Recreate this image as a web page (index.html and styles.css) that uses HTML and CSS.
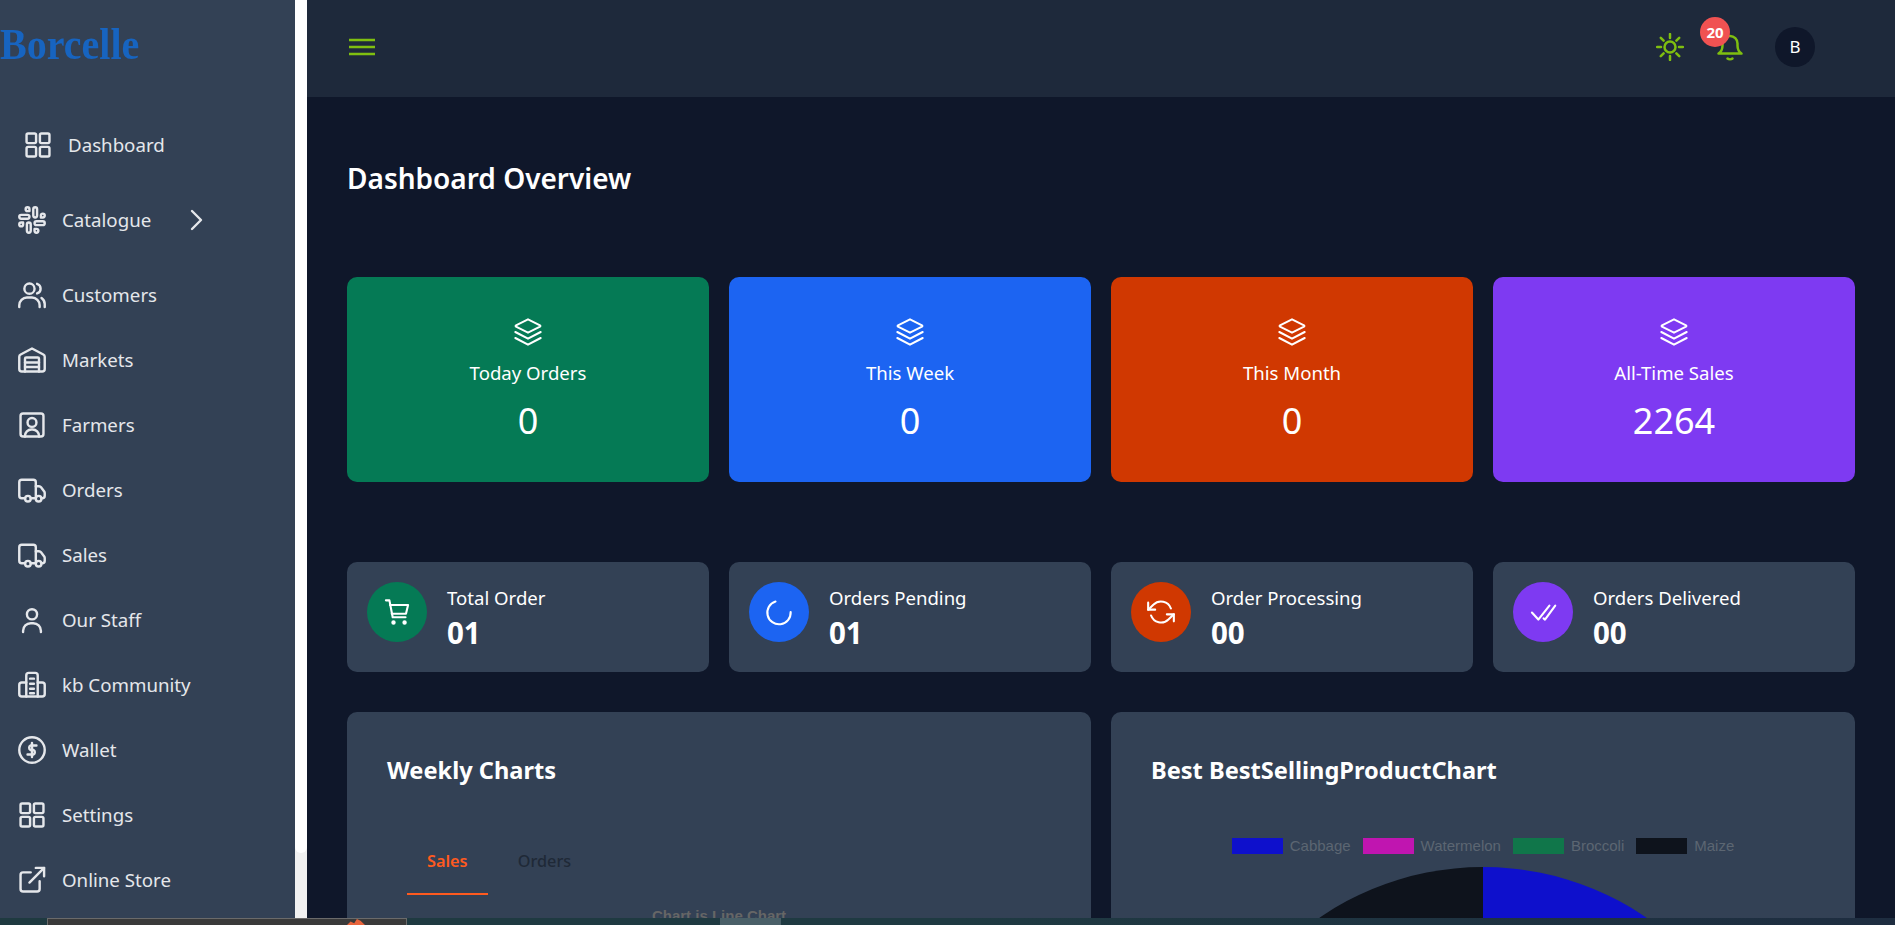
FILE: index.html
```html
<!DOCTYPE html>
<html lang="en">
<head>
  <meta charset="UTF-8" />
  <meta name="viewport" content="width=device-width, initial-scale=1.0"/>
  <title>Borcelle Dashboard</title>
  <link rel="stylesheet" href="styles.css">
</head>
<body>

  <svg class="sprites" width="0" height="0">
    <symbol id="i-grid" viewBox="1 1 22 22"><rect x="3" y="3" width="7.5" height="7.5" rx="1.2"/><rect x="13.5" y="3" width="7.5" height="7.5" rx="1.2"/><rect x="3" y="13.5" width="7.5" height="7.5" rx="1.2"/><rect x="13.5" y="13.5" width="7.5" height="7.5" rx="1.2"/></symbol>
    <symbol id="i-slack" viewBox="1 1 22 22"><path d="M14.5 10c-.83 0-1.5-.67-1.5-1.5v-5c0-.83.67-1.5 1.5-1.5s1.5.67 1.5 1.5v5c0 .83-.67 1.5-1.5 1.5z"/><path d="M20.5 10H19V8.5c0-.83.67-1.5 1.5-1.5s1.5.67 1.5 1.5-.67 1.5-1.5 1.5z"/><path d="M9.5 14c.83 0 1.5.67 1.5 1.5v5c0 .83-.67 1.5-1.5 1.5S8 21.33 8 20.5v-5c0-.83.67-1.5 1.5-1.5z"/><path d="M3.5 14H5v1.5c0 .83-.67 1.5-1.5 1.5S2 16.33 2 15.5 2.67 14 3.5 14z"/><path d="M14 14.5c0-.83.67-1.5 1.5-1.5h5c.83 0 1.5.67 1.5 1.5s-.67 1.5-1.5 1.5h-5c-.83 0-1.5-.67-1.5-1.5z"/><path d="M15.5 19H14v1.5c0 .83.67 1.5 1.5 1.5s1.5-.67 1.5-1.5-.67-1.5-1.5-1.5z"/><path d="M10 9.5C10 8.67 9.33 8 8.5 8h-5C2.67 8 2 8.67 2 9.5S2.67 11 3.5 11h5c.83 0 1.5-.67 1.5-1.5z"/><path d="M8.5 5H10V3.5C10 2.67 9.33 2 8.5 2S7 2.67 7 3.5 7.67 5 8.5 5z"/></symbol>
    <symbol id="i-users" viewBox="1 1 22 22"><circle cx="10" cy="7" r="4"/><path d="M2 21.5v-1.5a6 6 0 0 1 6-6h4a6 6 0 0 1 6 6v1.5"/><path d="M16 3.2a4 4 0 0 1 0 7.6"/><path d="M19.500 14.300a6 6 0 0 1 2.500 5v2.200"/></symbol>
    <symbol id="i-store" viewBox="1 1 22 22"><path d="M2 9.5a2 2 0 0 1 1.1-1.8L12 3l8.9 4.7A2 2 0 0 1 22 9.5V19a2 2 0 0 1-2 2H4a2 2 0 0 1-2-2z"/><path d="M6.5 21V11a1 1 0 0 1 1-1h9a1 1 0 0 1 1 1v10"/><path d="M6.5 14h11M6.5 17.5h11"/></symbol>
    <symbol id="i-contact" viewBox="1 1 22 22"><rect x="3" y="3" width="18" height="18" rx="2"/><circle cx="12" cy="10" r="3.5"/><path d="M6.5 21v-.5a5 5 0 0 1 5-5h1a5 5 0 0 1 5 5v.5"/></symbol>
    <symbol id="i-truck" viewBox="1 1 22 22"><path d="M6.5 18.5H4a2 2 0 0 1-2-2V6a2 2 0 0 1 2-2h9a2 2 0 0 1 2 2v12.5h-4"/><path d="M15 9h2.5a2 2 0 0 1 1.6.8l2.5 3.4a2 2 0 0 1 .4 1.2v2.1a2 2 0 0 1-2 2h-.5"/><circle cx="8.8" cy="18.8" r="2.2"/><circle cx="17.2" cy="18.8" r="2.2"/></symbol>
    <symbol id="i-user" viewBox="1 1 22 22"><circle cx="12" cy="7.500" r="4"/><path d="M5 21.500v-1a6 6 0 0 1 6-6h2a6 6 0 0 1 6 6v1"/></symbol>
    <symbol id="i-building" viewBox="1 1 22 22"><path d="M7.5 21V4.500a2 2 0 0 1 2-2h5a2 2 0 0 1 2 2V21"/><path d="M7.500 10H4a2 2 0 0 0-2 2v7a2 2 0 0 0 2 2h16a2 2 0 0 0 2-2v-7a2 2 0 0 0-2-2h-3.500"/><path d="M10.500 7h3M10.500 11h3M10.500 15h3M10.500 18.500h3"/></symbol>
    <symbol id="i-dollar" viewBox="1 1 22 22"><circle cx="12" cy="12" r="10"/><path d="M15.500 8.500H10.800a2 2 0 0 0 0 3.500h2.400a2 2 0 0 1 0 3.500H8.500"/><path d="M12 6.500v11"/></symbol>
    <symbol id="i-link" viewBox="1 1 22 22"><path d="M11 6H5a2 2 0 0 0-2 2v11a2 2 0 0 0 2 2h11a2 2 0 0 0 2-2v-6"/><path d="M15 2.500h6.500V9"/><path d="M10 14L21.500 2.500"/></symbol>
    <symbol id="i-layers" viewBox="1.500 1.500 21 21"><path d="M12 2.500l9 4.600a.5.5 0 0 1 0 .9L12 12.500 3 8a.5.5 0 0 1 0-.9z"/><path d="M2.500 12l9.500 5 9.500-5"/><path d="M2.500 16.500l9.500 5 9.500-5"/></symbol>
  </svg>

  <div class="app">
    <!-- Sidebar -->
    <aside class="sidebar">
      <div class="logo">Borcelle</div>
      <nav class="menu">
        <a class="menu-item menu-first" href="#"><svg class="icon"><use href="#i-grid"/></svg>Dashboard</a>
        <a class="menu-item menu-catalogue" href="#"><svg class="icon"><use href="#i-slack"/></svg>Catalogue
          <svg class="chevron" viewBox="0 0 24 24"><path d="M8 3l9 9-9 9"/></svg></a>
        <a class="menu-item" href="#"><svg class="icon"><use href="#i-users"/></svg>Customers</a>
        <a class="menu-item" href="#"><svg class="icon"><use href="#i-store"/></svg>Markets</a>
        <a class="menu-item" href="#"><svg class="icon"><use href="#i-contact"/></svg>Farmers</a>
        <a class="menu-item" href="#"><svg class="icon"><use href="#i-truck"/></svg>Orders</a>
        <a class="menu-item" href="#"><svg class="icon"><use href="#i-truck"/></svg>Sales</a>
        <a class="menu-item" href="#"><svg class="icon"><use href="#i-user"/></svg>Our Staff</a>
        <a class="menu-item" href="#"><svg class="icon"><use href="#i-building"/></svg>kb Community</a>
        <a class="menu-item" href="#"><svg class="icon"><use href="#i-dollar"/></svg>Wallet</a>
        <a class="menu-item" href="#"><svg class="icon"><use href="#i-grid"/></svg>Settings</a>
        <a class="menu-item" href="#"><svg class="icon"><use href="#i-link"/></svg>Online Store</a>
      </nav>
    </aside>
    <div class="scrollbar"><div class="scroll-thumb"></div></div>

    <div class="page">
      <header class="topbar">
        <svg class="burger" viewBox="0 0 26 18"><path d="M0 2h26M0 9h26M0 16h26"/></svg>
        <div class="top-actions">
          <svg class="sun" viewBox="0 0 28 28"><circle cx="14" cy="14" r="5.500"/><path d="M14 1v4M14 23v4M1 14h4M23 14h4M4.800 4.800l2.800 2.800M20.400 20.400l2.800 2.800M4.800 23.200l2.800-2.800M20.400 7.600l2.800-2.800"/></svg>
          <div class="bell-wrap">
            <svg class="bell" viewBox="0 0 28 28"><path d="M2.500 20.500c2.500-1.500 4-4 4-8v-2a7.500 7.500 0 0 1 15 0v2c0 4 1.500 6.500 4 8z"/><path d="M11.500 25.500c1.200 1 3.800 1 5 0"/></svg>
            <span class="badge">20</span>
          </div>
          <div class="avatar">B</div>
        </div>
      </header>

      <main class="content">
        <h1 class="page-title">Dashboard Overview</h1>

        <section class="big-cards">
          <div class="big-card green"><svg class="big-icon"><use href="#i-layers"/></svg><p class="big-label">Today Orders</p><p class="big-value">0</p></div>
          <div class="big-card blue"><svg class="big-icon"><use href="#i-layers"/></svg><p class="big-label">This Week</p><p class="big-value">0</p></div>
          <div class="big-card orange"><svg class="big-icon"><use href="#i-layers"/></svg><p class="big-label">This Month</p><p class="big-value">0</p></div>
          <div class="big-card purple"><svg class="big-icon"><use href="#i-layers"/></svg><p class="big-label">All-Time Sales</p><p class="big-value">2264</p></div>
        </section>

        <section class="stat-cards">
          <div class="stat-card">
            <div class="stat-icon green"><svg viewBox="0 0 24 24"><path d="M2.500 2h3l2.800 14.500h11"/><path d="M6 6h15.500l-1.800 7.500H7.500"/><circle cx="9" cy="21" r="1"/><circle cx="18.500" cy="21" r="1"/></svg></div>
            <div><p class="stat-label">Total Order</p><p class="stat-value">01</p></div>
          </div>
          <div class="stat-card">
            <div class="stat-icon blue"><svg viewBox="0 0 24 24"><path d="M9 3A10 10 0 1 0 22 12"/></svg></div>
            <div><p class="stat-label">Orders Pending</p><p class="stat-value">01</p></div>
          </div>
          <div class="stat-card">
            <div class="stat-icon orange"><svg viewBox="0 0 24 24"><path d="M1 4v6h6"/><path d="M23 20v-6h-6"/><path d="M20.490 9A9 9 0 0 0 5.640 5.640L1 10m22 4l-4.640 4.360A9 9 0 0 1 3.510 15"/></svg></div>
            <div><p class="stat-label">Order Processing</p><p class="stat-value">00</p></div>
          </div>
          <div class="stat-card">
            <div class="stat-icon purple"><svg viewBox="0 0 24 24"><path d="M2.500 12.500l5.500 6L17.500 6.500"/><path d="M12.500 17.500l1.200 1L22.500 6.500"/></svg></div>
            <div><p class="stat-label">Orders Delivered</p><p class="stat-value">00</p></div>
          </div>
        </section>

        <section class="chart-panels">
          <div class="panel">
            <h2 class="panel-title">Weekly Charts</h2>
            <div class="tabs">
              <span class="tab tab-active">Sales</span>
              <span class="tab">Orders</span>
            </div>
            <p class="chart-caption">Chart is Line Chart</p>
          </div>
          <div class="panel">
            <h2 class="panel-title">Best BestSellingProductChart</h2>
            <ul class="legend">
              <li><span class="swatch swatch-cabbage"></span>Cabbage</li>
              <li><span class="swatch swatch-watermelon"></span>Watermelon</li>
              <li><span class="swatch swatch-broccoli"></span>Broccoli</li>
              <li><span class="swatch swatch-maize"></span>Maize</li>
            </ul>
            <svg class="pie" viewBox="0 0 578 578">
              <path fill="#0e131c" d="M289 289V0A289 289 0 0 0 0 289z"/>
              <path fill="#0e10cc" d="M289 289V0A289 289 0 0 1 578 289z"/>
            </svg>
          </div>
        </section>
      </main>
    </div>
  </div>

  <!-- Strip of the next window along the bottom edge -->
  <div class="bottom-strip">
    <div class="strip-window"><span class="strip-flame"></span></div>
    <div class="strip-patch"></div>
  </div>

</body>
</html>
```

FILE: styles.css
```css
* {
  box-sizing: border-box;
}
html, body {
  margin: 0;
  height: 100%;
  overflow: hidden;
}
body {
  font-family: "Noto Sans", "Open Sans", Arial, sans-serif;
  background: #0f172a;
  color: #fff;
}
p, h1, h2, ul {
  margin: 0;
  padding: 0;
}
.sprites {
  position: absolute;
}
.app {
  display: flex;
  height: 925px;
}

/* sidebar */
.sidebar {
  width: 295px;
  flex: none;
  background: #334155;
  overflow: hidden;
}
.logo {
  height: 32px;
  margin-top: 28px;
  font-family: "Liberation Serif", serif;
  font-weight: bold;
  font-size: 45px;
  line-height: 32px;
  color: #1764c0;
  transform: scaleX(0.89);
  transform-origin: left center;
  filter: blur(0.6px);
}
.menu {
  margin-top: 47px;
}
.menu-item {
  display: flex;
  align-items: center;
  height: 65px;
  padding-left: 18px;
  color: #e5e7eb;
  text-decoration: none;
  font-size: 18.700px;
}
.menu-first {
  padding-left: 24px;
  height: 75px;
}
.menu-catalogue {
  height: 75px;
  margin-bottom: 5px;
}
.icon {
  width: 28px;
  height: 28px;
  margin-right: 16px;
  fill: none;
  stroke: #e5e7eb;
  stroke-width: 1.900;
  stroke-linecap: round;
  stroke-linejoin: round;
  flex: none;
}
.chevron {
  width: 24px;
  height: 24px;
  margin-left: 33px;
  fill: none;
  stroke: #e5e7eb;
  stroke-width: 2.400;
  stroke-linecap: round;
  stroke-linejoin: round;
}
.scrollbar {
  width: 12px;
  flex: none;
  background: #f1f1f1;
}
.scroll-thumb {
  height: 853px;
  background: #fff;
  border-radius: 0 0 6px 6px;
}

/* top bar */
.page {
  flex: 1;
  min-width: 0;
  display: flex;
  flex-direction: column;
}
.topbar {
  height: 97px;
  flex: none;
  background: #1e293b;
  display: flex;
  align-items: center;
  justify-content: space-between;
  padding: 0 80px 3px 42px;
}
.burger {
  width: 26px;
  height: 18px;
  fill: none;
  stroke: #7fbf10;
  stroke-width: 2.500;
}
.top-actions {
  display: flex;
  align-items: center;
}
.sun, .bell {
  width: 28px;
  height: 28px;
  fill: none;
  stroke: #7fbf10;
  stroke-width: 2.500;
  stroke-linecap: round;
  stroke-linejoin: round;
  display: block;
}
.bell-wrap {
  position: relative;
  margin-left: 32px;
}
.badge {
  position: absolute;
  left: -16px;
  top: -16px;
  width: 30px;
  height: 30px;
  border-radius: 50%;
  background: #f05252;
  font-size: 15px;
  font-weight: 700;
  line-height: 30px;
  text-align: center;
}
.avatar {
  width: 40px;
  height: 40px;
  margin-left: 31px;
  border-radius: 50%;
  background: #0f172a;
  font-size: 17px;
  line-height: 40px;
  text-align: center;
}

/* content */
.content {
  padding: 60px 40px 0;
}
.page-title {
  font-size: 28px;
  font-weight: 600;
  line-height: 42px;
}
.big-cards, .stat-cards {
  display: grid;
  grid-template-columns: repeat(4, 1fr);
  gap: 20px;
}
.big-cards {
  margin-top: 78px;
}
.big-card {
  height: 205px;
  border-radius: 10px;
  padding-top: 41px;
  text-align: center;
}
.big-icon {
  width: 28px;
  height: 28px;
  fill: none;
  stroke: #fff;
  stroke-width: 1.500;
  stroke-linecap: round;
  stroke-linejoin: round;
  display: block;
  margin: 0 auto;
}
.big-label {
  margin-top: 13px;
  font-size: 18.600px;
  line-height: 28px;
}
.big-value {
  margin-top: 12px;
  font-size: 36px;
  line-height: 44px;
}
.green { background: #057a55; }
.blue { background: #1c64f2; }
.orange { background: #d03801; }
.purple { background: #7e3af2; }

.stat-cards {
  margin-top: 80px;
}
.stat-card {
  display: flex;
  align-items: flex-start;
  gap: 20px;
  height: 110px;
  padding: 20px;
  background: #334155;
  border-radius: 10px;
}
.stat-icon {
  width: 60px;
  height: 60px;
  flex: none;
  border-radius: 50%;
  display: flex;
  align-items: center;
  justify-content: center;
}
.stat-icon svg {
  width: 28px;
  height: 28px;
  fill: none;
  stroke: #fff;
  stroke-width: 1.800;
  stroke-linecap: round;
  stroke-linejoin: round;
}
.stat-label {
  font-size: 18.600px;
  line-height: 26px;
  margin-top: 3px;
}
.stat-value {
  font-size: 29.500px;
  font-weight: 700;
  line-height: 36px;
  margin-top: 4px;
}

/* charts */
.chart-panels {
  display: grid;
  grid-template-columns: 1fr 1fr;
  gap: 20px;
  margin-top: 40px;
}
.panel {
  height: 600px;
  padding: 40px;
  background: #334155;
  border-radius: 10px;
  overflow: hidden;
}
.panel-title {
  font-size: 23.600px;
  font-weight: 700;
  line-height: 36px;
}
.tabs {
  display: flex;
  margin: 47px 0 0 20px;
}
.tab {
  padding: 0 20px;
  height: 60px;
  line-height: 52px;
  font-size: 16.300px;
  font-weight: 500;
  color: #1f2937;
}
.tab-active {
  color: #ff5a1f;
  font-weight: 600;
  border-bottom: 2px solid #ff5a1f;
  margin-right: 10px;
}
.chart-caption {
  margin-top: 12px;
  text-align: center;
  font-family: "Liberation Sans", Arial, sans-serif;
  font-size: 15px;
  font-weight: bold;
  color: #666;
}
.legend {
  list-style: none;
  display: flex;
  justify-content: center;
  gap: 12px;
  margin-top: 50px;
  font-family: "Liberation Sans", Arial, sans-serif;
  font-size: 15px;
  line-height: 16px;
  color: #5c6672;
}
.legend li {
  display: flex;
  align-items: center;
  gap: 7px;
}
.swatch {
  width: 51px;
  height: 16px;
}
.swatch-cabbage { background: #0e10cc; }
.swatch-watermelon { background: #c015b0; }
.swatch-broccoli { background: #10764a; }
.swatch-maize { background: #0e131c; }
.pie {
  display: block;
  width: 578px;
  height: 578px;
  margin: 13px auto 0;
}

/* bottom edge */
.bottom-strip {
  position: fixed;
  left: 0;
  right: 0;
  bottom: 0;
  height: 7px;
  background: linear-gradient(90deg, #1f3a40, #1f3a42 50%, #1e2d40);
}
.strip-window {
  position: absolute;
  left: 47px;
  top: 0;
  width: 360px;
  height: 7px;
  background: #3a3a3a;
  border: 1px solid #6a6a6a;
  border-bottom: 0;
}
.strip-flame {
  position: absolute;
  left: 299px;
  top: 0;
  width: 18px;
  height: 6px;
  background: #e8643c;
  clip-path: polygon(0 100%, 20% 40%, 40% 70%, 55% 0, 75% 30%, 100% 100%);
}
.strip-patch {
  position: absolute;
  left: 720px;
  top: 0;
  width: 61px;
  height: 7px;
  background: #4a6068;
}
```
